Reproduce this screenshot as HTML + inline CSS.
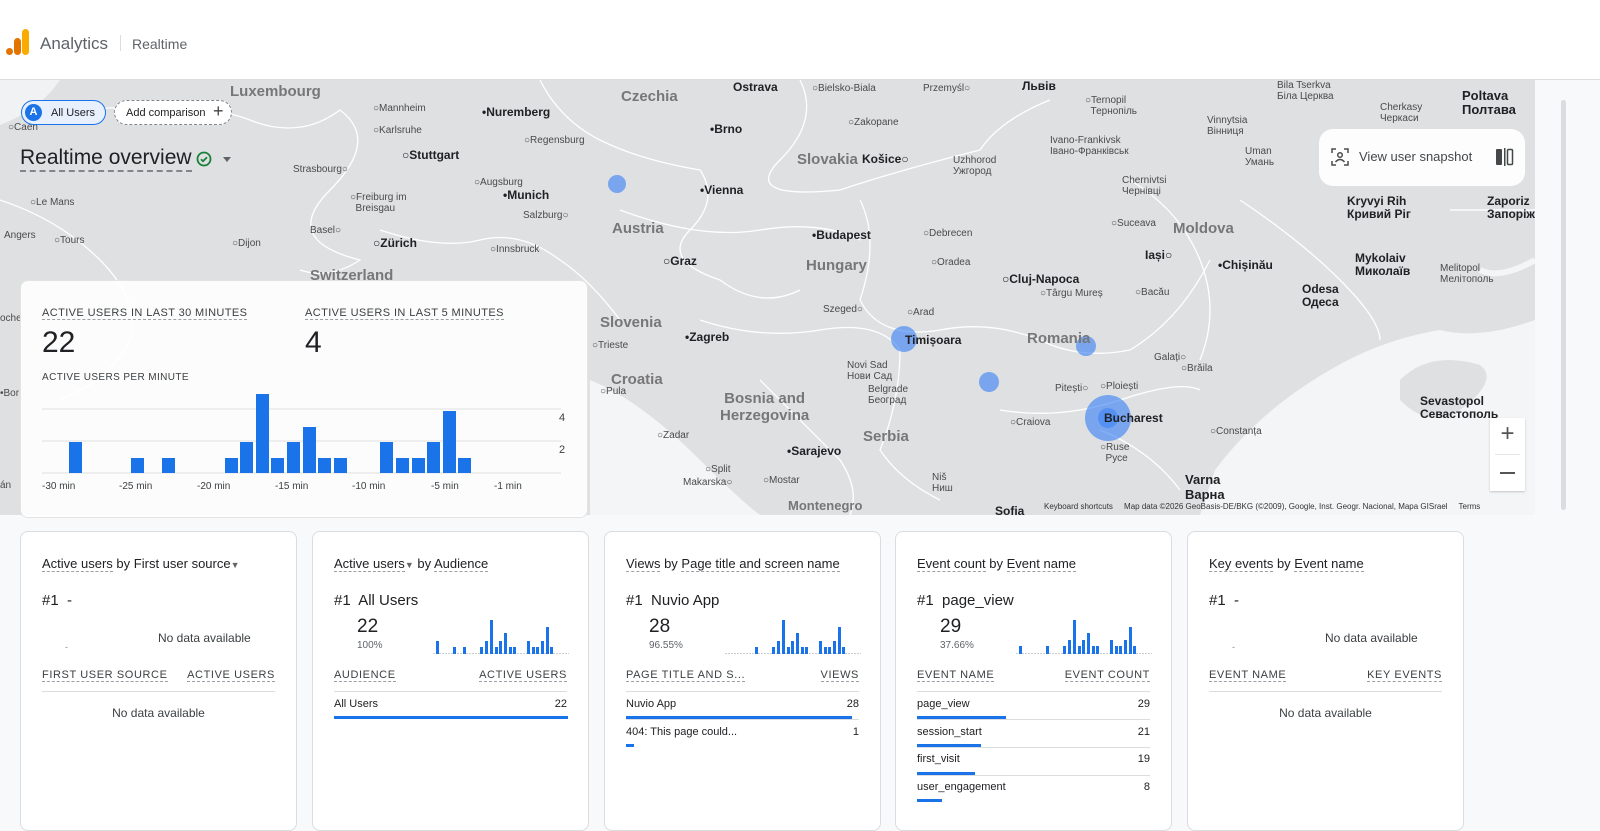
<!DOCTYPE html>
<html><head><meta charset="utf-8"><style>
*{box-sizing:border-box;margin:0;padding:0}
body{width:1600px;height:824px;overflow:hidden;background:#f8f9fa;font-family:"Liberation Sans",Arial,sans-serif;color:#202124;position:relative}
.hdr{position:absolute;left:0;top:0;width:1600px;height:80px;background:#fff;border-bottom:1px solid #dadce0}
.map{position:absolute;left:0;top:80px;width:1535px;height:435px;background:#dfe0e2;overflow:hidden}
.lbl{position:absolute;font-size:10px;color:#4a4a4a;white-space:nowrap}
.b{font-weight:bold;color:#202124;font-size:12px}
.c{font-size:15px;font-weight:bold;color:#777}
.card{position:absolute;top:531px;width:277px;height:300px;background:#fff;border:1px solid #dadce0;border-radius:8px}
.card .t{position:absolute;left:21px;top:24px;font-size:13px;color:#202124;white-space:nowrap}
.u{border-bottom:1px dashed #9aa0a6}
.card .r{position:absolute;left:21px;top:60px;font-size:15px;white-space:nowrap}
.card .n{position:absolute;left:44px;top:84px;font-size:19px}
.card .p{position:absolute;left:44px;top:108px;font-size:10px;color:#5f6368}
.hd{position:absolute;top:137px;font-size:11px;letter-spacing:.6px;color:#3c4043;border-bottom:1px dashed #9aa0a6}
.line{position:absolute;left:21px;right:21px;height:1px;background:#dadce0}
.row{position:absolute;left:21px;right:21px;font-size:11px;color:#202124}
.row span{float:right}
.bar{position:absolute;left:21px;height:3px;background:#1a73e8}
.spark{position:absolute;left:120px;top:86px;width:136px;height:36px}
</style></head><body>
<div class="hdr">
<svg style="position:absolute;left:6px;top:29px" width="24" height="26" viewBox="0 0 24 26"><rect x="16" y="0" width="7" height="26" rx="3.5" fill="#f9ab00"/><rect x="8" y="9" width="7" height="17" rx="3.5" fill="#e37400"/><circle cx="3.5" cy="22.5" r="3.5" fill="#e37400"/></svg>
<div style="position:absolute;left:40px;top:34px;font-size:17px;color:#5f6368">Analytics</div>
<div style="position:absolute;left:120px;top:35px;width:1px;height:16px;background:#dadce0"></div>
<div style="position:absolute;left:132px;top:36px;font-size:14px;color:#5f6368">Realtime</div>
</div>

<div class="map">
<svg width="1535" height="435" style="position:absolute;left:0;top:0">
<path d="M0 0H60Q40 30 0 45Z" fill="#f1f2f3"/>
<path d="M590 300Q640 320 700 380Q740 420 760 435H590Z" fill="#f4f5f6"/>
<path d="M1200 435L1215 390Q1260 330 1330 290Q1380 260 1440 250Q1480 260 1535 240V435Z" fill="#f4f5f6"/>
<path d="M1400 300Q1430 270 1480 285Q1500 300 1460 330Q1430 350 1400 320Z" fill="#dfe0e2"/>
<path d="M1535 180Q1500 200 1480 190" stroke="#f4f5f6" stroke-width="6" fill="none"/>
<path d="M1450 130H1535" stroke="#f4f5f6" stroke-width="2" fill="none"/>
<g stroke="#fff" stroke-width="1.3" fill="none">
<path d="M80 30Q200 20 250 40T340 30Q380 60 330 110T360 180Q330 200 300 190"/>
<path d="M540 0Q560 40 600 60T700 90Q720 120 690 150T720 200Q760 230 800 210"/>
<path d="M800 0Q820 40 780 80T840 110Q900 90 980 70Q1000 40 1050 20"/>
<path d="M860 120Q880 160 860 220Q880 260 940 250Q990 240 1040 260Q1080 280 1130 270Q1180 240 1210 180"/>
<path d="M1130 100Q1180 130 1200 180Q1220 230 1200 280"/>
<path d="M700 240Q760 260 820 250T900 270Q900 320 880 370Q900 400 940 420"/>
<path d="M760 300Q800 340 840 380Q860 410 850 435"/>
<path d="M1000 330Q1060 340 1120 320T1200 310"/>
<path d="M1100 350Q1150 370 1180 410"/>
<path d="M380 150Q440 170 480 160T560 180Q590 200 620 240"/>
<path d="M0 120Q60 140 100 180T130 260Q110 300 60 320"/>
<path d="M620 130Q700 160 760 150T860 160"/>
<path d="M1240 120Q1300 160 1340 200T1380 260"/>
</g>
<g fill="#4285f4" fill-opacity=".65"><circle cx="617" cy="104" r="9"/><circle cx="904" cy="259" r="13"/><circle cx="1086" cy="266" r="10"/><circle cx="989" cy="302" r="10"/><circle cx="1108" cy="338" r="23"/><circle cx="1108" cy="338" r="10"/></g>
</svg>
<div class="lbl c" style="left:230px;top:3px">Luxembourg</div>
<div class="lbl c" style="left:621px;top:8px">Czechia</div>
<div class="lbl c" style="left:797px;top:71px">Slovakia</div>
<div class="lbl c" style="left:612px;top:140px">Austria</div>
<div class="lbl c" style="left:806px;top:177px">Hungary</div>
<div class="lbl c" style="left:1027px;top:250px">Romania</div>
<div class="lbl c" style="left:1173px;top:140px">Moldova</div>
<div class="lbl c" style="left:600px;top:234px">Slovenia</div>
<div class="lbl c" style="left:611px;top:291px">Croatia</div>
<div class="lbl c" style="left:720px;top:310px;text-align:center">Bosnia and<br>Herzegovina</div>
<div class="lbl c" style="left:863px;top:348px">Serbia</div>
<div class="lbl c" style="left:788px;top:418px;font-size:13px">Montenegro</div>
<div class="lbl c" style="left:310px;top:187px">Switzerland</div>
<div class="lbl b" style="left:482px;top:25px">•Nuremberg</div>
<div class="lbl b" style="left:733px;top:0px">Ostrava</div>
<div class="lbl b" style="left:710px;top:42px">•Brno</div>
<div class="lbl b" style="left:402px;top:68px">○Stuttgart</div>
<div class="lbl b" style="left:503px;top:108px">•Munich</div>
<div class="lbl b" style="left:700px;top:103px">•Vienna</div>
<div class="lbl b" style="left:862px;top:72px">Košice○</div>
<div class="lbl b" style="left:373px;top:156px">○Zürich</div>
<div class="lbl b" style="left:812px;top:148px">•Budapest</div>
<div class="lbl b" style="left:663px;top:174px">○Graz</div>
<div class="lbl b" style="left:1002px;top:192px">○Cluj-Napoca</div>
<div class="lbl b" style="left:1145px;top:168px">Iași○</div>
<div class="lbl b" style="left:1218px;top:178px">•Chișinău</div>
<div class="lbl b" style="left:685px;top:250px">•Zagreb</div>
<div class="lbl b" style="left:905px;top:253px">Timișoara</div>
<div class="lbl b" style="left:1104px;top:331px">Bucharest</div>
<div class="lbl b" style="left:787px;top:364px">•Sarajevo</div>
<div class="lbl b" style="left:1185px;top:392px;font-size:13px">Varna<br>Варна</div>
<div class="lbl b" style="left:995px;top:424px">Sofia</div>
<div class="lbl b" style="left:1022px;top:0px;font-size:12px;line-height:12px">Львів</div>
<div class="lbl b" style="left:1462px;top:9px;font-size:13px;line-height:14px">Poltava<br>Полтава</div>
<div class="lbl b" style="left:1347px;top:115px;line-height:13px">Kryvyi Rih<br>Кривий Ріг</div>
<div class="lbl b" style="left:1487px;top:115px;line-height:13px">Zaporiz<br>Запоріж</div>
<div class="lbl b" style="left:1355px;top:172px;line-height:13px">Mykolaiv<br>Миколаїв</div>
<div class="lbl b" style="left:1302px;top:203px;line-height:13px">Odesa<br>Одеса</div>
<div class="lbl b" style="left:1420px;top:315px;line-height:13px">Sevastopol<br>Севастополь</div>
<div class="lbl" style="left:373px;top:23px">○Mannheim</div>
<div class="lbl" style="left:373px;top:45px">○Karlsruhe</div>
<div class="lbl" style="left:524px;top:55px">○Regensburg</div>
<div class="lbl" style="left:293px;top:84px">Strasbourg○</div>
<div class="lbl" style="left:474px;top:97px">○Augsburg</div>
<div class="lbl" style="left:350px;top:112px">○Freiburg im<br>&nbsp;&nbsp;Breisgau</div>
<div class="lbl" style="left:523px;top:130px">Salzburg○</div>
<div class="lbl" style="left:310px;top:145px">Basel○</div>
<div class="lbl" style="left:490px;top:164px">○Innsbruck</div>
<div class="lbl" style="left:232px;top:158px">○Dijon</div>
<div class="lbl" style="left:30px;top:117px">○Le Mans</div>
<div class="lbl" style="left:54px;top:155px">○Tours</div>
<div class="lbl" style="left:4px;top:150px">Angers</div>
<div class="lbl" style="left:8px;top:42px">○Caen</div>
<div class="lbl" style="left:812px;top:3px">○Bielsko-Biala</div>
<div class="lbl" style="left:923px;top:3px">Przemyśl○</div>
<div class="lbl" style="left:848px;top:37px">○Zakopane</div>
<div class="lbl" style="left:953px;top:75px">Uzhhorod<br>Ужгород</div>
<div class="lbl" style="left:923px;top:148px">○Debrecen</div>
<div class="lbl" style="left:931px;top:177px">○Oradea</div>
<div class="lbl" style="left:1040px;top:208px">○Târgu Mureș</div>
<div class="lbl" style="left:1135px;top:207px">○Bacău</div>
<div class="lbl" style="left:1111px;top:138px">○Suceava</div>
<div class="lbl" style="left:1122px;top:95px">Chernivtsi<br>Чернівці</div>
<div class="lbl" style="left:1050px;top:55px">Ivano-Frankivsk<br>Івано-Франківськ</div>
<div class="lbl" style="left:1085px;top:15px">○Ternopil<br>&nbsp;&nbsp;Тернопіль</div>
<div class="lbl" style="left:1207px;top:35px">Vinnytsia<br>Вінниця</div>
<div class="lbl" style="left:1245px;top:66px">Uman<br>Умань</div>
<div class="lbl" style="left:1277px;top:0px">Bila Tserkva<br>Біла Церква</div>
<div class="lbl" style="left:1380px;top:22px">Cherkasy<br>Черкаси</div>
<div class="lbl" style="left:1440px;top:183px">Melitopol<br>Мелітополь</div>
<div class="lbl" style="left:823px;top:224px">Szeged○</div>
<div class="lbl" style="left:907px;top:227px">○Arad</div>
<div class="lbl" style="left:847px;top:280px">Novi Sad<br>Нови Сад</div>
<div class="lbl" style="left:868px;top:304px">Belgrade<br>Београд</div>
<div class="lbl" style="left:1055px;top:303px">Pitești○</div>
<div class="lbl" style="left:1100px;top:301px">○Ploiești</div>
<div class="lbl" style="left:1154px;top:272px">Galați○</div>
<div class="lbl" style="left:1181px;top:283px">○Brăila</div>
<div class="lbl" style="left:1010px;top:337px">○Craiova</div>
<div class="lbl" style="left:1100px;top:362px">○Ruse<br>&nbsp;&nbsp;Русе</div>
<div class="lbl" style="left:1210px;top:346px">○Constanța</div>
<div class="lbl" style="left:592px;top:260px">○Trieste</div>
<div class="lbl" style="left:600px;top:306px">○Pula</div>
<div class="lbl" style="left:657px;top:350px">○Zadar</div>
<div class="lbl" style="left:705px;top:384px">○Split</div>
<div class="lbl" style="left:683px;top:397px">Makarska○</div>
<div class="lbl" style="left:763px;top:395px">○Mostar</div>
<div class="lbl" style="left:932px;top:392px">Niš<br>Ниш</div>
<div class="lbl" style="left:0px;top:233px">oche</div>
<div class="lbl" style="left:0px;top:308px">•Bor</div>
<div class="lbl" style="left:0px;top:400px">án</div>
<div class="lbl" style="left:1044px;top:422px;font-size:8px;color:#333">Keyboard shortcuts &nbsp;&nbsp;&nbsp; Map data ©2026 GeoBasis-DE/BKG (©2009), Google, Inst. Geogr. Nacional, Mapa GISrael &nbsp;&nbsp;&nbsp; Terms</div>
</div>
<div style="position:absolute;left:1535px;top:80px;width:65px;height:435px;background:#f8f9fa"></div>
<div style="position:absolute;left:1561px;top:100px;width:5px;height:410px;background:#dadce0;border-radius:3px"></div>

<div style="position:absolute;left:21px;top:100px;width:85px;height:25px;border:1px solid #1a73e8;border-radius:13px;background:#e8f0fe"><div style="position:absolute;left:3px;top:3px;width:17px;height:17px;border-radius:50%;background:#1a73e8;color:#fff;font-size:11px;font-weight:bold;text-align:center;line-height:17px">A</div><div style="position:absolute;left:29px;top:6px;font-size:11px">All Users</div></div>
<div style="position:absolute;left:114px;top:100px;width:118px;height:25px;border:1px dashed #80868b;border-radius:13px;background:#fff"><div style="position:absolute;left:11px;top:6px;font-size:11px">Add comparison</div><div style="position:absolute;left:98px;top:0px;font-size:18px;color:#444">+</div></div>
<div style="position:absolute;left:20px;top:146px;font-size:21px;color:#202124;border-bottom:2px dashed #80868b;line-height:24px">Realtime overview</div>
<svg style="position:absolute;left:196px;top:151px" width="16" height="16" viewBox="0 0 16 16"><circle cx="8" cy="8" r="6.5" fill="none" stroke="#188038" stroke-width="1.8"/><path d="M5 8.2l2 2 4-4" stroke="#188038" stroke-width="1.8" fill="none"/></svg>
<div style="position:absolute;left:223px;top:157px;border:4px solid transparent;border-top:5px solid #5f6368"></div>

<div style="position:absolute;left:1319px;top:129px;width:206px;height:57px;background:#fff;border-radius:14px;opacity:.95">
<svg style="position:absolute;left:12px;top:19px" width="18" height="18" viewBox="0 0 18 18" fill="none" stroke="#444" stroke-width="1.5"><path d="M1 5V1H5M13 1H17V5M1 13V17H5M13 17H17V13"/><circle cx="9" cy="7" r="2.3"/><path d="M4.5 14Q9 9 13.5 14"/></svg>
<div style="position:absolute;left:40px;top:20px;font-size:13px;color:#3c4043">View user snapshot</div>
<svg style="position:absolute;left:176px;top:19px" width="20" height="18" viewBox="0 0 20 18"><rect x="1" y="1" width="6" height="16" rx="1" fill="#3c4043"/><rect x="9" y="0" width="1.5" height="18" fill="#3c4043"/><rect x="12.5" y="1.5" width="5" height="15" rx="1" fill="none" stroke="#3c4043" stroke-width="1.5"/></svg>
</div>
<div style="position:absolute;left:1490px;top:418px;width:35px;height:73px;background:#fff;box-shadow:0 1px 2px rgba(0,0,0,.2)"><div style="position:absolute;left:0;width:35px;top:2px;text-align:center;font-size:24px;color:#555">+</div><div style="position:absolute;left:5px;top:36px;width:25px;height:1px;background:#e6e6e6"></div><div style="position:absolute;left:10px;top:54px;width:15px;height:2px;background:#555"></div></div>

<div style="position:absolute;left:20px;top:280px;width:568px;height:238px;background:rgba(255,255,255,.9);border-radius:8px;border:1px solid #e3e3e3">
<div style="position:absolute;left:21px;top:26px;font-size:11px;letter-spacing:.4px;color:#3c4043;border-bottom:1px dashed #9aa0a6">ACTIVE USERS IN LAST 30 MINUTES</div>
<div style="position:absolute;left:284px;top:26px;font-size:11px;letter-spacing:.4px;color:#3c4043;border-bottom:1px dashed #9aa0a6">ACTIVE USERS IN LAST 5 MINUTES</div>
<div style="position:absolute;left:21px;top:45px;font-size:30px">22</div>
<div style="position:absolute;left:284px;top:45px;font-size:30px">4</div>
<div style="position:absolute;left:21px;top:91px;font-size:10px;letter-spacing:.4px;color:#3c4043">ACTIVE USERS PER MINUTE</div>
<svg style="position:absolute;left:0;top:0" width="568" height="238">
<g stroke="#e0e0e0"><line x1="21" y1="128" x2="540" y2="128"/><line x1="21" y1="160" x2="540" y2="160"/><line x1="21" y1="192" x2="540" y2="192"/></g>
<text x="538" y="140" font-size="11" fill="#3c4043" font-family="Liberation Sans">4</text>
<text x="538" y="172" font-size="11" fill="#3c4043" font-family="Liberation Sans">2</text>
<g fill="#1a73e8">
<rect x="48" y="161" width="13" height="31"/><rect x="110" y="177" width="13" height="15"/><rect x="141" y="177" width="13" height="15"/><rect x="204" y="177" width="13" height="15"/><rect x="219" y="161" width="13" height="31"/><rect x="235" y="113" width="13" height="79"/><rect x="250" y="177" width="13" height="15"/><rect x="266" y="161" width="13" height="31"/><rect x="282" y="146" width="13" height="46"/><rect x="297" y="177" width="13" height="15"/><rect x="313" y="177" width="13" height="15"/><rect x="359" y="161" width="13" height="31"/><rect x="375" y="177" width="13" height="15"/><rect x="391" y="177" width="13" height="15"/><rect x="406" y="161" width="13" height="31"/><rect x="422" y="130" width="13" height="62"/><rect x="437" y="177" width="13" height="15"/>
</g>
<g font-size="10" fill="#3c4043" font-family="Liberation Sans"><text x="21" y="208">-30 min</text><text x="98" y="208">-25 min</text><text x="176" y="208">-20 min</text><text x="254" y="208">-15 min</text><text x="331" y="208">-10 min</text><text x="410" y="208">-5 min</text><text x="473" y="208">-1 min</text></g>
</svg>
</div>

<!-- cards -->
<div class="card" style="left:20px">
<div class="t"><span class="u">Active users</span> by <span>First user source</span><span style="font-size:9px;color:#666">▼</span></div>
<div class="r">#1&nbsp; -</div>
<div style="position:absolute;left:44px;top:110px;font-size:9px;color:#888">-</div>
<div style="position:absolute;left:137px;top:99px;font-size:12px;color:#3c4043">No data available</div>
<div class="hd" style="left:21px">FIRST USER SOURCE</div><div class="hd" style="right:21px">ACTIVE USERS</div>
<div class="line" style="top:159px"></div>
<div style="position:absolute;left:0;right:0;top:174px;text-align:center;font-size:12px;color:#3c4043">No data available</div>
</div>

<div class="card" style="left:312px">
<div class="t"><span class="u">Active users</span><span style="font-size:9px;color:#666">▼</span> by <span class="u">Audience</span></div>
<div class="r">#1&nbsp; All Users</div><div class="n">22</div><div class="p">100%</div>
<svg class="spark" viewBox="0 0 136 36"><line x1="0" y1="35.5" x2="136" y2="35.5" stroke="#ccc" stroke-dasharray="2 1"/><g fill="#1a73e8"><rect x="3" y="23" width="3" height="13"/><rect x="20" y="29" width="3" height="7"/><rect x="30" y="29" width="3" height="7"/><rect x="47" y="29" width="3" height="7"/><rect x="52" y="23" width="3" height="13"/><rect x="57" y="2" width="3" height="34"/><rect x="62" y="29" width="3" height="7"/><rect x="66" y="23" width="3" height="13"/><rect x="71" y="15" width="3" height="21"/><rect x="76" y="29" width="3" height="7"/><rect x="80" y="29" width="3" height="7"/><rect x="94" y="23" width="3" height="13"/><rect x="99" y="29" width="3" height="7"/><rect x="103" y="29" width="3" height="7"/><rect x="108" y="23" width="3" height="13"/><rect x="113" y="9" width="3" height="27"/><rect x="117" y="29" width="3" height="7"/></g></svg>
<div class="hd" style="left:21px">AUDIENCE</div><div class="hd" style="right:21px">ACTIVE USERS</div>
<div class="line" style="top:159px"></div>
<div class="row" style="top:166px">All Users<span>22</span></div>
<div class="bar" style="top:184px;width:234px"></div>
</div>

<div class="card" style="left:604px">
<div class="t"><span class="u">Views</span> by <span class="u">Page title and screen name</span></div>
<div class="r">#1&nbsp; Nuvio App</div><div class="n">28</div><div class="p">96.55%</div>
<svg class="spark" viewBox="0 0 136 36"><line x1="0" y1="35.5" x2="136" y2="35.5" stroke="#ccc" stroke-dasharray="2 1"/><g fill="#1a73e8"><rect x="30" y="29" width="3" height="7"/><rect x="47" y="29" width="3" height="7"/><rect x="52" y="23" width="3" height="13"/><rect x="57" y="2" width="3" height="34"/><rect x="62" y="29" width="3" height="7"/><rect x="66" y="23" width="3" height="13"/><rect x="71" y="15" width="3" height="21"/><rect x="76" y="29" width="3" height="7"/><rect x="80" y="29" width="3" height="7"/><rect x="94" y="23" width="3" height="13"/><rect x="99" y="29" width="3" height="7"/><rect x="103" y="29" width="3" height="7"/><rect x="108" y="23" width="3" height="13"/><rect x="113" y="9" width="3" height="27"/><rect x="117" y="29" width="3" height="7"/></g></svg>
<div class="hd" style="left:21px">PAGE TITLE AND S...</div><div class="hd" style="right:21px">VIEWS</div>
<div class="line" style="top:159px"></div>
<div class="row" style="top:166px">Nuvio App<span>28</span></div>
<div class="bar" style="top:184px;width:226px"></div>
<div class="line" style="top:187px"></div>
<div class="row" style="top:194px">404: This page could...<span>1</span></div>
<div class="bar" style="top:212px;width:8px"></div>
</div>

<div class="card" style="left:895px">
<div class="t"><span class="u">Event count</span> by <span class="u">Event name</span></div>
<div class="r">#1&nbsp; page_view</div><div class="n">29</div><div class="p">37.66%</div>
<svg class="spark" viewBox="0 0 136 36"><line x1="0" y1="35.5" x2="136" y2="35.5" stroke="#ccc" stroke-dasharray="2 1"/><g fill="#1a73e8"><rect x="3" y="28" width="3" height="8"/><rect x="30" y="28" width="3" height="8"/><rect x="47" y="28" width="3" height="8"/><rect x="52" y="22" width="3" height="14"/><rect x="57" y="2" width="3" height="34"/><rect x="62" y="28" width="3" height="8"/><rect x="66" y="22" width="3" height="14"/><rect x="71" y="15" width="3" height="21"/><rect x="76" y="28" width="3" height="8"/><rect x="80" y="28" width="3" height="8"/><rect x="94" y="22" width="3" height="14"/><rect x="99" y="28" width="3" height="8"/><rect x="103" y="28" width="3" height="8"/><rect x="108" y="22" width="3" height="14"/><rect x="113" y="9" width="3" height="27"/><rect x="117" y="28" width="3" height="8"/></g></svg>
<div class="hd" style="left:21px">EVENT NAME</div><div class="hd" style="right:21px">EVENT COUNT</div>
<div class="line" style="top:159px"></div>
<div class="row" style="top:166px">page_view<span>29</span></div><div class="bar" style="top:184px;width:89px"></div>
<div class="line" style="top:187px"></div>
<div class="row" style="top:194px">session_start<span>21</span></div><div class="bar" style="top:212px;width:64px"></div>
<div class="line" style="top:215px"></div>
<div class="row" style="top:221px">first_visit<span>19</span></div><div class="bar" style="top:240px;width:58px"></div>
<div class="line" style="top:243px"></div>
<div class="row" style="top:249px">user_engagement<span>8</span></div><div class="bar" style="top:267px;width:25px"></div>
</div>

<div class="card" style="left:1187px">
<div class="t"><span class="u">Key events</span> by <span class="u">Event name</span></div>
<div class="r">#1&nbsp; -</div>
<div style="position:absolute;left:44px;top:110px;font-size:9px;color:#888">-</div>
<div style="position:absolute;left:137px;top:99px;font-size:12px;color:#3c4043">No data available</div>
<div class="hd" style="left:21px">EVENT NAME</div><div class="hd" style="right:21px">KEY EVENTS</div>
<div class="line" style="top:159px"></div>
<div style="position:absolute;left:0;right:0;top:174px;text-align:center;font-size:12px;color:#3c4043">No data available</div>
</div>
</body></html>
